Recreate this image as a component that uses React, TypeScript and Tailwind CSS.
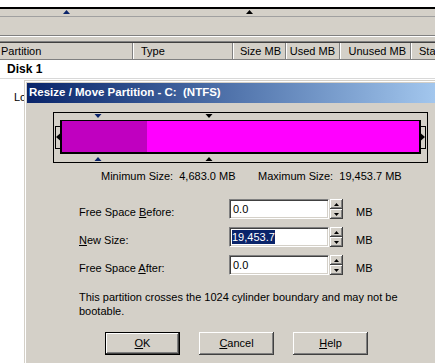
import React from 'react';

const raised =
  'shadow-[inset_-1px_-1px_0_#404040,inset_1px_1px_0_#ffffff,inset_-2px_-2px_0_#808080,inset_2px_2px_0_#d4d0c8]';

const Spinner: React.FC = () => (
  <div className="ml-px flex flex-col w-[13px] h-[20px]">
    <div className={`h-[10px] bg-[#d4d0c8] flex items-center justify-center ${raised}`}>
      <svg width="5" height="3" viewBox="0 0 5 3">
        <polygon points="2.5,0 5,3 0,3" fill="#000" />
      </svg>
    </div>
    <div className={`h-[10px] bg-[#d4d0c8] flex items-center justify-center ${raised}`}>
      <svg width="5" height="3" viewBox="0 0 5 3">
        <polygon points="0,0 5,0 2.5,3" fill="#000" />
      </svg>
    </div>
  </div>
);

interface FieldRowProps {
  label: React.ReactNode;
  value: string;
  selected?: boolean;
}

const FieldRow: React.FC<FieldRowProps> = ({ label, value, selected }) => (
  <div className="flex h-[20px]">
    <div className="w-[150px] pt-[7px] leading-[13px]">{label}</div>
    <div className="w-[100px] h-[20px] bg-white border border-t-[#808080] border-l-[#808080] border-b-white border-r-white shadow-[inset_1px_1px_0_#404040,inset_-1px_-1px_0_#d4d0c8] pl-[2px] flex items-center">
      {selected ? (
        <span className="bg-[#0a246a] text-white leading-[14px]">{value}</span>
      ) : (
        <span className="pl-px">{value}</span>
      )}
    </div>
    <Spinner />
    <div className="ml-[13px] pt-[7px] leading-[13px]">MB</div>
  </div>
);

const PartitionBar: React.FC = () => (
  <svg width="376" height="51" viewBox="0 0 376 51" className="block">
    <rect x="0.5" y="0.5" width="374" height="50" fill="none" stroke="#000" />
    {/* handles */}
    <rect x="2.5" y="14.5" width="5" height="22" fill="#d4d0c8" stroke="#000" />
    <polygon points="3,25 7,21.5 7,28.5" fill="#000" />
    <rect x="367.5" y="14.5" width="5" height="22" fill="#d4d0c8" stroke="#000" />
    <polygon points="372,25 368,21.5 368,28.5" fill="#000" />
    {/* bar */}
    <rect x="7" y="8" width="361" height="34" fill="#000" />
    <rect x="9" y="9" width="85" height="31" fill="#c000c0" />
    <rect x="94" y="9" width="272" height="31" fill="#ff00ff" />
    {/* markers */}
    <polygon points="41.5,2 48.5,2 45,6" fill="#0a246a" />
    <polygon points="152.5,2 159.5,2 156,6" fill="#000" />
    <polygon points="41.5,49 48.5,49 45,45" fill="#0a246a" />
    <polygon points="152.5,49 159.5,49 156,45" fill="#000" />
  </svg>
);

const HeaderCell: React.FC<{ w: string; right?: boolean; children: React.ReactNode }> = ({ w, right, children }) => (
  <div
    className={`${w} h-full shrink-0 border-l border-l-white border-r border-r-[#808080] flex items-center overflow-hidden whitespace-nowrap ${right ? 'justify-end pr-[4px]' : 'pl-[7px]'}`}
  >
    {children}
  </div>
);

const Btn: React.FC<{ isDefault?: boolean; children: React.ReactNode }> = ({ isDefault, children }) => (
  <div
    className={`w-[75px] h-[23px] bg-[#d4d0c8] flex items-center justify-center ${isDefault ? 'border border-black' : ''} ${raised}`}
  >
    {children}
  </div>
);

export default function App() {
  return (
    <div className="relative w-[435px] h-[363px] overflow-hidden bg-white text-black text-[11px] font-['Liberation_Sans',Arial,sans-serif]">
      {/* disk map strip */}
      <div className="h-[7px] bg-white" />
      <div className="h-[2px] bg-black" />
      <div className="relative h-[7px] bg-[#d4d0c8]">
        <svg width="7" height="4" className="absolute left-[63px] top-[1px]">
          <polygon points="0,4 7,4 3.5,0" fill="#0a246a" />
        </svg>
        <svg width="7" height="4" className="absolute left-[246px] top-[1px]">
          <polygon points="0,4 7,4 3.5,0" fill="#000" />
        </svg>
      </div>
      <div className="h-px bg-[#a0a0a0]" />
      <div className="h-[18px] bg-[#d4d0c8]" />
      <div className="h-px bg-[#808080]" />
      <div className="h-px bg-white" />
      <div className="h-[4px] bg-[#d4d0c8]" />
      <div className="h-px bg-[#808080]" />
      <div className="h-px bg-[#404040]" />

      {/* list header */}
      <div className="flex h-[17px] bg-[#d4d0c8] border-b border-[#808080] text-[11px]">
        <div className="w-[133px] h-full shrink-0 border-r border-r-[#808080] flex items-center pl-px">Partition</div>
        <HeaderCell w="w-[100px]">Type</HeaderCell>
        <HeaderCell w="w-[53px]" right>Size MB</HeaderCell>
        <HeaderCell w="w-[54px]" right>Used MB</HeaderCell>
        <HeaderCell w="w-[71px]" right>Unused MB</HeaderCell>
        <HeaderCell w="w-[40px]">Sta</HeaderCell>
      </div>

      {/* list rows */}
      <div className="h-[19px] flex items-center pl-[7px] font-bold text-[12px] border-b border-[#d8d8d8]">Disk 1</div>
      <div className="h-[34px] flex items-center pl-[14px] pt-[2px]">
        <span className="w-[10px] overflow-hidden whitespace-nowrap">Lo</span>
      </div>

      {/* dialog */}
      <div className="absolute left-[24px] top-[80px] w-[420px] h-[290px] bg-[#d4d0c8] border-l border-t border-[#d4d0c8]">
        <div className="h-full border-l border-t border-white p-px">
          <div className="h-[20px] bg-linear-to-r from-[#0a246a] to-[#a6caf0] flex items-center pl-[2px] text-white font-bold text-[11.5px] whitespace-pre">
            Resize / Move Partition - C:  (NTFS)
          </div>

          <div className="ml-[26px] mt-[9px]">
            <PartitionBar />
          </div>

          <div className="flex mt-[7px] h-[13px] leading-[13px] whitespace-pre">
            <div className="ml-[74px] w-[157px]">Minimum Size:  4,683.0 MB</div>
            <div>Maximum Size:  19,453.7 MB</div>
          </div>

          <div className="ml-[52px] mt-[16px] flex flex-col gap-[8px]">
            <FieldRow
              label={<>Free Space <span className="underline">B</span>efore:</>}
              value="0.0"
            />
            <FieldRow label={<><span className="underline">N</span>ew Size:</>} value="19,453.7" selected />
            <FieldRow
              label={<>Free Space <span className="underline">A</span>fter:</>}
              value="0.0"
            />
          </div>

          <p className="ml-[52px] mt-[15px] leading-[14px]">
            This partition crosses the 1024 cylinder boundary and may not be
            <br />
            bootable.
          </p>

          <div className="ml-[78px] mt-[14px] flex gap-[19px]">
            <Btn isDefault>
              <span className="underline">O</span>K
            </Btn>
            <Btn>
              <span className="underline">C</span>ancel
            </Btn>
            <Btn>
              <span className="underline">H</span>elp
            </Btn>
          </div>
        </div>
      </div>
    </div>
  );
}
